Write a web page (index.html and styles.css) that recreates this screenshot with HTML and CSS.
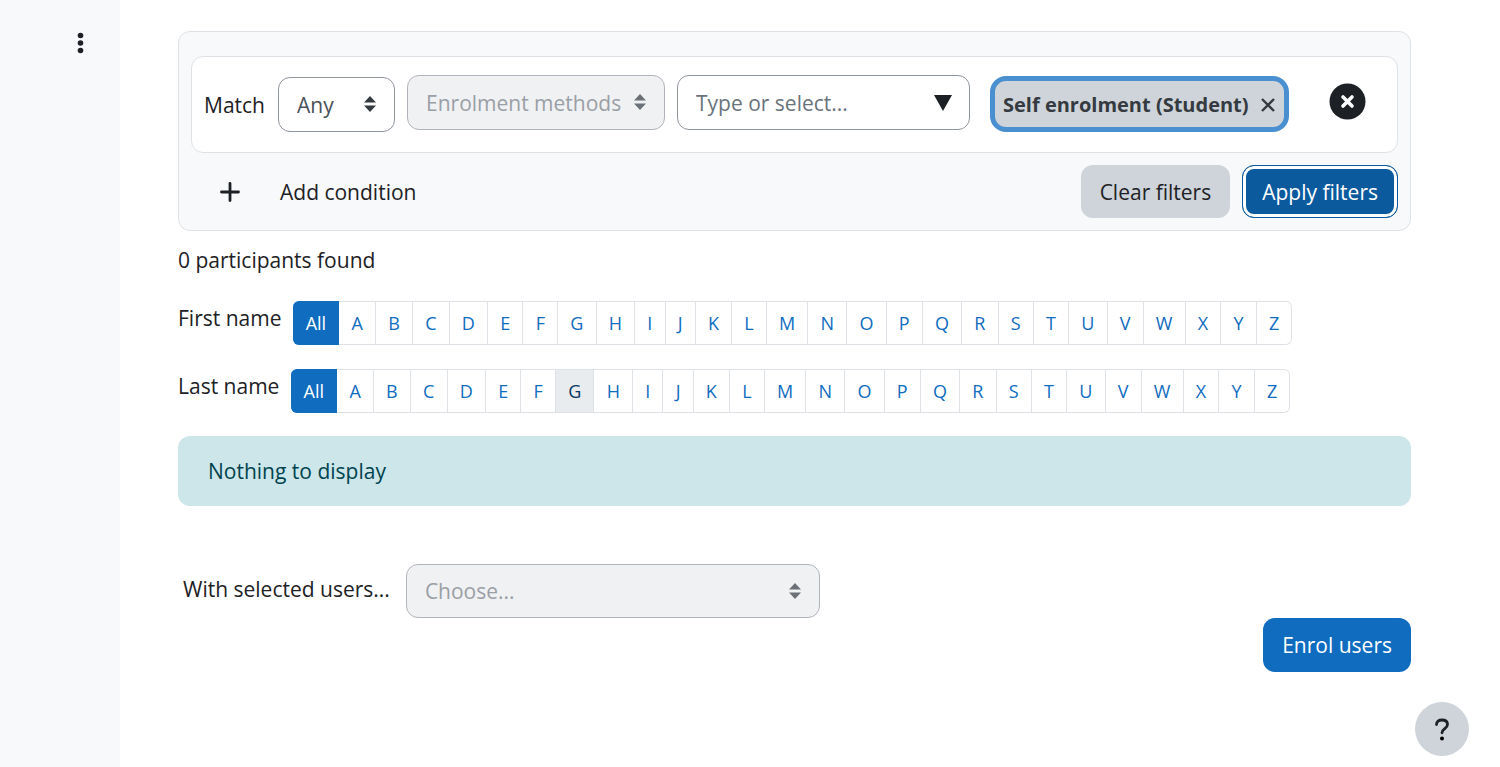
FILE: index.html
```html
<!DOCTYPE html>
<html lang="en">

<head>
  <title>Participants</title>
  <meta charset="UTF-8">
  <meta name="viewport" content="width=device-width, initial-scale=1">
  <link rel="stylesheet" href="styles.css">
</head>

<body>

  <aside class="drawer">
    <button class="drawer-menu" type="button" aria-label="Course menu">
      <svg width="8" height="22" viewBox="0 0 8 22"><circle cx="3.500" cy="3.500" r="2.800"/><circle cx="3.500" cy="11" r="2.800"/><circle cx="3.500" cy="18.500" r="2.800"/></svg>
    </button>
  </aside>

  <main class="content">

    <section class="filters">
      <div class="filter-row">
        <div class="join">
          <label for="join">Match</label>
          <span class="select">
            <select id="join"><option>Any</option><option>All</option><option>None</option></select>
            <svg class="arrows" width="12" height="16" viewBox="0 0 12 16"><path d="M6 0l6 6.500H0zM6 16l6-6.500H0z"/></svg>
          </span>
        </div>
        <span class="select select-type">
          <select aria-label="Filter type" disabled><option>Enrolment methods</option></select>
          <svg class="arrows" width="12" height="16" viewBox="0 0 12 16"><path d="M6 0l6 6.500H0zM6 16l6-6.500H0z"/></svg>
        </span>
        <div class="combo">
          <input type="text" aria-label="Enrolment method" placeholder="Type or select...">
          <svg class="combo-arrow" width="18" height="16" viewBox="0 0 18 16"><path d="M0 0h18L9 16z"/></svg>
        </div>
        <button class="chip" type="button">
          Self enrolment (Student)
          <svg width="14" height="14" viewBox="0 0 14 14"><path d="M1 1l12 12M13 1L1 13"/></svg>
        </button>
        <button class="remove" type="button" aria-label="Remove filter row">
          <svg width="37" height="37" viewBox="0 0 37 37"><circle cx="18.500" cy="18.500" r="18"/><path d="M14 14l9 9M23 14l-9 9"/></svg>
        </button>
      </div>

      <div class="filter-actions">
        <button class="add" type="button">
          <svg width="20" height="20" viewBox="0 0 20 20"><path d="M10 1.500v17M1.500 10h17"/></svg>
          Add condition
        </button>
        <button class="btn btn-secondary" type="button">Clear filters</button>
        <button class="btn btn-apply" type="button">Apply filters</button>
      </div>
    </section>

    <p class="found">0 participants found</p>

    <nav class="initials" aria-label="First name">
      <span>First name</span>
      <div class="letters">
        <a class="active" href="#">All</a><a href="#">A</a><a href="#">B</a><a href="#">C</a><a href="#">D</a><a href="#">E</a><a href="#">F</a><a href="#">G</a><a href="#">H</a><a href="#">I</a><a href="#">J</a><a href="#">K</a><a href="#">L</a><a href="#">M</a><a href="#">N</a><a href="#">O</a><a href="#">P</a><a href="#">Q</a><a href="#">R</a><a href="#">S</a><a href="#">T</a><a href="#">U</a><a href="#">V</a><a href="#">W</a><a href="#">X</a><a href="#">Y</a><a href="#">Z</a>
      </div>
    </nav>

    <nav class="initials" aria-label="Last name">
      <span>Last name</span>
      <div class="letters">
        <a class="active" href="#">All</a><a href="#">A</a><a href="#">B</a><a href="#">C</a><a href="#">D</a><a href="#">E</a><a href="#">F</a><a class="hovered" href="#">G</a><a href="#">H</a><a href="#">I</a><a href="#">J</a><a href="#">K</a><a href="#">L</a><a href="#">M</a><a href="#">N</a><a href="#">O</a><a href="#">P</a><a href="#">Q</a><a href="#">R</a><a href="#">S</a><a href="#">T</a><a href="#">U</a><a href="#">V</a><a href="#">W</a><a href="#">X</a><a href="#">Y</a><a href="#">Z</a>
      </div>
    </nav>

    <div class="alert">Nothing to display</div>

    <div class="bulk">
      <label for="action">With selected users...</label>
      <span class="select select-action">
        <select id="action" disabled><option>Choose...</option></select>
        <svg class="arrows" width="12" height="16" viewBox="0 0 12 16"><path d="M6 0l6 6.500H0zM6 16l6-6.500H0z"/></svg>
      </span>
    </div>

    <div class="enrol">
      <button class="btn btn-primary" type="button">Enrol users</button>
    </div>

  </main>

  <button class="help" type="button" aria-label="Help">
    <svg width="16" height="24" viewBox="0 0 16 24"><path d="M2.500 7.500C2.500 4.500 4.700 3 8 3s5.500 1.700 5.500 4.500c0 4.200-5.500 4-5.500 8.300"/><circle cx="8" cy="21.500" r="2"/></svg>
  </button>

</body>

</html>
```
FILE: styles.css
```css
* {
  box-sizing: border-box;
}

body {
  margin: 0;
  min-height: 100vh;
  display: flex;
  background: #fff;
  color: #1d2125;
  font-family: "Open Sans", "Noto Sans", sans-serif;
  font-size: 21px;
  line-height: 34px;
}

button,
input,
select {
  font: inherit;
  color: inherit;
}

button {
  border: none;
  background: none;
  padding: 0;
  cursor: pointer;
  white-space: nowrap;
}

.drawer {
  flex: 0 0 120px;
  background: #f8f9fb;
  padding: 32px 35px;
  text-align: right;
}

.drawer-menu,
.drawer-menu svg {
  display: inline-block;
  vertical-align: top;
  fill: #1d2125;
}

.content {
  flex: 1;
  min-width: 0;
  padding: 31px 89px 31px 58px;
}

/* filters */
.filters {
  padding: 24px 12px 12px;
  background: #f8f9fb;
  border: 1px solid #dee2e6;
  border-radius: 12px;
}

.filter-row {
  display: flex;
  align-items: flex-start;
  gap: 12px;
  padding: 18px 12px 20px;
  background: #fff;
  border: 1px solid #dee2e6;
  border-radius: 12px;
}

.join {
  display: flex;
  align-items: center;
  gap: 12px;
  margin-top: 2px;
}

.select,
.combo {
  position: relative;
  display: block;
}

.join label {
  width: 62px;
}

.join .select {
  width: 117px;
}

.select-type {
  width: 258px;
}

.combo {
  width: 293px;
}

.select select,
.combo input {
  display: block;
  width: 100%;
  height: 55px;
  padding: 0 18px;
  color: #495057;
  background: #fff;
  border: 1px solid #8f959e;
  border-radius: 12px;
  appearance: none;
}

.select select:disabled {
  color: #9a9fa5;
  background: #f0f1f3;
  border-color: #b1b5bb;
  opacity: 1;
}

.combo input::placeholder {
  color: #6a737b;
  opacity: 1;
}

.arrows {
  position: absolute;
  right: 19px;
  top: 19px;
  fill: #343a40;
  pointer-events: none;
}

select:disabled + .arrows {
  fill: #6c7077;
}

.combo-arrow {
  position: absolute;
  right: 18px;
  top: 20px;
  fill: #1d2125;
}

.chip {
  display: flex;
  align-items: center;
  gap: 12px;
  height: 56px;
  margin: 1px 0 0 8px;
  padding: 2px 9px 0 8px;
  background: #ced4da;
  border: 5px solid #4a90d0;
  border-radius: 16px;
  color: #343a40;
  font-size: 20px;
  font-weight: 700;
}

.chip svg {
  fill: none;
  stroke: #343a40;
  stroke-width: 2.4;
}

.remove {
  margin: 8px 19px 0 auto;
  height: 37px;
}

.remove svg {
  display: block;
  fill: #1d2125;
}

.remove path {
  stroke: #fff;
  stroke-width: 3.6;
  stroke-linecap: round;
}

.filter-actions {
  display: flex;
  gap: 12px;
  margin-top: 12px;
}

.add {
  display: flex;
  align-items: center;
  gap: 40px;
  margin-right: auto;
  padding-left: 29px;
}

.add svg {
  stroke: #1d2125;
  stroke-width: 2.8;
  stroke-linecap: round;
}

.btn {
  height: 53px;
  padding: 0 19px;
  border-radius: 12px;
}

.btn-secondary {
  background: #ced4da;
}

.btn-apply {
  color: #fff;
  background: #0b5a9d;
  border: 1px solid #0b5a9d;
  box-shadow: inset 0 0 0 3px #fff;
}

.btn-primary {
  height: 54px;
  color: #fff;
  background: #0f6cbf;
}

/* participants */
.found {
  margin: 12px 0 0;
}

.initials {
  display: flex;
  align-items: flex-start;
  gap: 12px;
  margin-top: 24px;
}

.letters {
  display: flex;
  width: 999px;
}

.letters a {
  flex: 1 0 auto;
  padding: 0 12px;
  color: #0f6cbf;
  border: 1px solid #dee2e6;
  border-left: none;
  font-size: 18px;
  line-height: 42px;
  text-align: center;
  text-decoration: none;
}

.letters a:last-child {
  border-radius: 0 6px 6px 0;
}

.letters .active {
  color: #fff;
  background: #0f6cbf;
  border-color: #0f6cbf;
  border-radius: 6px 0 0 6px;
}

.letters .hovered {
  color: #083863;
  background: #e9ecef;
}

.alert {
  margin-top: 23px;
  padding: 18px 30px;
  color: #00434e;
  background: #cce6ea;
  border-radius: 12px;
}

.bulk {
  display: flex;
  align-items: flex-start;
  gap: 16px;
  margin-top: 58px;
  padding-left: 5px;
}

.bulk label {
  padding-top: 8px;
}

.select-action {
  width: 414px;
}

.select-action select {
  height: 54px;
}

.enrol {
  display: flex;
  justify-content: flex-end;
}

.help {
  position: fixed;
  right: 31px;
  bottom: 11px;
  display: flex;
  align-items: center;
  justify-content: center;
  width: 54px;
  height: 54px;
  background: #ced4da;
  border-radius: 50%;
}

.help path {
  fill: none;
  stroke: #1d2125;
  stroke-width: 2.8;
  stroke-linecap: round;
}
```
